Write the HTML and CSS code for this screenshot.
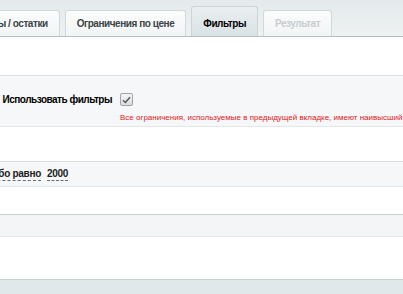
FILE: index.html
```html
<!DOCTYPE html>
<html lang="ru">
<head>
    <meta charset="UTF-8">
    <title>Фильтры</title>
    <link rel="stylesheet" href="styles.css">
</head>
<body>
    <div class="tabs">
        <div class="tab">Цены / остатки</div>
        <div class="tab">Ограничения по цене</div>
        <div class="tab active">Фильтры</div>
        <div class="tab disabled">Результат</div>
    </div>

    <div class="content">
        <div class="gap gap-top"></div>

        <div class="row row-filters">
            <div class="label">Использовать фильтры</div>
            <div class="value">
                <span class="checkbox">
                    <svg width="9" height="8" viewBox="0 0 9 8"><path d="M1 4.2 L3.4 6.5 L8 1.2" fill="none" stroke="#555" stroke-width="1.4"/></svg>
                </span>
                <div class="note">Все ограничения, используемые в предыдущей вкладке, имеют наивысший приоритет</div>
            </div>
        </div>

        <div class="gap gap-mid"></div>

        <div class="row row-cond">
            <div class="cond-field"><span class="dashed">Цена больше либо равно</span></div>
            <span class="dashed">2000</span>
        </div>

        <div class="gap gap-small"></div>

        <div class="row row-empty"></div>

        <div class="gap gap-bottom"></div>
    </div>

    <div class="footer"></div>
</body>
</html>
```

FILE: styles.css
```css
body {
    margin: 0;
    font-family: "Liberation Sans", Arial, sans-serif;
    color: #000;
    background: #fff;
    overflow: hidden;
}
.tabs {
    display: flex;
    align-items: flex-end;
    height: 36px;
    margin-left: -32px;
    background: linear-gradient(#e4eaec, #edf1f2);
    border-bottom: 1px solid #b5bec1;
    box-shadow: 0 1px 0 #dfe4e6;
}
.tab {
    height: 25px;
    line-height: 25px;
    padding: 0 11px;
    margin-right: 5px;
    border: 1px solid #d2d9db;
    border-bottom: none;
    border-radius: 3px 3px 0 0;
    background: linear-gradient(#fbfcfc, #f1f4f5);
    font-size: 10px;
    letter-spacing: -0.45px;
    font-weight: bold;
    color: #3b4447;
    white-space: nowrap;
}
.tab.active {
    height: 29px;
    line-height: 33px;
    background: linear-gradient(#e9eef0, #dae2e5);
    border-color: #ccd4d6;
    color: #000;
}
.tab.disabled {
    color: #c7cdcf;
}
.content {
    background: #fff;
}
.gap-top {
    height: 38px;
}
.gap-mid {
    height: 34px;
}
.gap-small {
    height: 27px;
}
.gap-bottom {
    height: 42px;
}
.row {
    background: #f5f7f8;
    border-top: 1px solid #d8dfe1;
    border-bottom: 1px solid #e2e7e9;
}
.row-filters {
    display: grid;
    grid-template-columns: 112px 1fr;
    column-gap: 8px;
    height: 50px;
    align-items: start;
}
.label {
    text-align: right;
    font-size: 10px;
    letter-spacing: -0.5px;
    font-weight: bold;
    padding-top: 18px;
    white-space: nowrap;
    color: #000;
}
.value {
    padding-top: 17px;
    white-space: nowrap;
    line-height: 0;
}
.checkbox {
    display: inline-flex;
    align-items: center;
    justify-content: center;
    width: 11px;
    height: 11px;
    border: 1px solid #9da5a8;
    border-radius: 2px;
    background: linear-gradient(#f4f5f5, #d9dcdd);
}
.note {
    margin-top: 6px;
    font-size: 8px;
    line-height: 11px;
    color: #e0201b;
}
.row-cond {
    display: flex;
    align-items: center;
    gap: 6px;
    height: 24px;
    font-size: 10px;
    letter-spacing: -0.3px;
    font-weight: bold;
    color: #222;
}
.cond-field {
    width: 41px;
    display: flex;
    justify-content: flex-end;
    white-space: nowrap;
}
.dashed {
    border-bottom: 1px dashed #6b6b6b;
    line-height: 13px;
}
.row-empty {
    height: 21px;
    border-top-color: #c9d0d2;
    background: #f3f6f7;
}
.footer {
    height: 20px;
    border-top: 1px solid #c8cfd1;
    background: #e1e8ea;
}
```
